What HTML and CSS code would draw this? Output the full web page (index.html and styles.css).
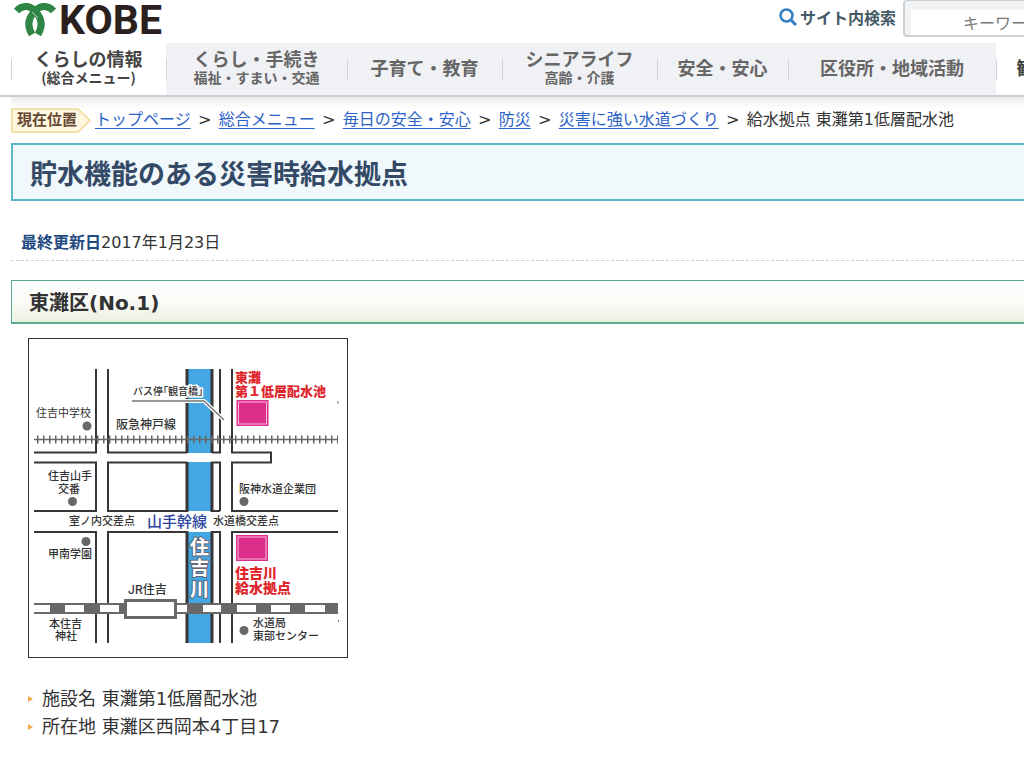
FILE: index.html
```html
<!DOCTYPE html>
<html lang="ja">
<head>
<meta charset="utf-8">
<meta name="viewport" content="width=device-width, initial-scale=1">
<title>貯水機能のある災害時給水拠点 - KOBE</title>
<link rel="stylesheet" href="styles.css">
</head>
<body>
<header class="header">
  <a class="logo" href="#" aria-label="KOBE">
    <svg class="logo-mark" viewBox="0 0 42 34" aria-hidden="true">
      <path d="M2.500 8C7 3 15 1 21 8C28 15 29 23 24 31.500" class="leaf"/>
      <path d="M39.500 8C35 3 27 1 21 8C14 15 13 23 18 31.500" class="leaf"/>
      <path d="M18 9L24 15" stroke="#fff" stroke-width=".7"/>
    </svg>
    <span class="logo-text">KOBE</span>
  </a>
  <form class="search">
    <label class="search-label" for="q">
      <svg class="search-icon" viewBox="0 0 18 18" aria-hidden="true"><circle cx="7.500" cy="7.500" r="6" fill="none" stroke="#337fc4" stroke-width="2.500"/><path d="M12 12l5 5" stroke="#337fc4" stroke-width="3"/></svg>
      サイト内検索
    </label>
    <span class="search-frame"><input id="q" class="search-input" type="text" placeholder="キーワード"></span>
  </form>
</header>
<nav class="nav">
  <a class="nav-item nav-m current" href="#">くらしの情報<small>(総合メニュー)</small></a>
  <a class="nav-item nav-l" href="#">くらし・手続き<small>福祉・すまい・交通</small></a>
  <a class="nav-item nav-m" href="#">子育て・教育</a>
  <a class="nav-item nav-m" href="#">シニアライフ<small>高齢・介護</small></a>
  <a class="nav-item nav-s" href="#">安全・安心</a>
  <a class="nav-item nav-xl" href="#">区役所・地域活動</a>
  <a class="nav-item nav-s current" href="#">観光・文化</a>
</nav>
<main class="main">
  <div class="crumbs">
    <span class="here"><svg class="here-shape" viewBox="0 0 80 25" aria-hidden="true"><path d="M1 1H67L79 12.500L67 24H1Z" fill="#fff7df" stroke="#edd791" stroke-width="1.500"/></svg><b class="here-text">現在位置</b></span>
    <ol class="crumb-list">
      <li><a href="#">トップページ</a></li>
      <li><a href="#">総合メニュー</a></li>
      <li><a href="#">毎日の安全・安心</a></li>
      <li><a href="#">防災</a></li>
      <li><a href="#">災害に強い水道づくり</a></li>
      <li>給水拠点 東灘第1低層配水池</li>
    </ol>
  </div>
  <h1 class="title">貯水機能のある災害時給水拠点</h1>
  <p class="updated"><b>最終更新日</b>2017年1月23日</p>
  <h2 class="section-title">東灘区(No.1)</h2>
  <svg class="map" viewBox="28 338 320 320" role="img" aria-label="東灘第1低層配水池 周辺地図">
    <rect x="28.500" y="338.500" width="319" height="319" fill="#fff" stroke="#333"/>
    <g fill="#42a7e3">
      <rect x="187" y="369" width="25" height="84"/>
      <rect x="187" y="462" width="25" height="49"/>
      <rect x="187" y="532" width="25" height="111"/>
    </g>
    <g class="road">
      <path d="M96 369V452.500H34M108 369V452.500H187M34 462.500H96V511H34M187 462.500H108V511H187M34 532H96V643M187 532H108V643"/>
      <path d="M220 369V452.500H212M220 511H212V462.500H220V511M212 532H220V643M232 369V452.500H271V462.500H232V511H338M338 532H232V643"/>
      <path class="bank" d="M187 369V453M212 369V453M187 462V512M212 462V512M187 531V643M212 531V643"/>
    </g>
    <path d="M34 439.500H338" stroke="#666" stroke-width="1.500"/>
    <path d="M37 439.500H338" stroke="#666" stroke-width="8" stroke-dasharray="1.500 4.500"/>
    <rect x="34" y="603" width="304" height="11" fill="#686868"/>
    <path d="M34 608.500H50M65 608.500H84M100 608.500H119M177 608.500H187M203 608.500H221M237 608.500H256M271 608.500H290M305 608.500H325" stroke="#fff" stroke-width="7"/>
    <rect x="125.500" y="600.500" width="50" height="17" fill="#fff" stroke="#686868" stroke-width="3"/>
    <g fill="#686868"><circle cx="87" cy="426" r="4.500"/><circle cx="72.500" cy="501.500" r="4.500"/><circle cx="86" cy="541.500" r="4.500"/><circle cx="244" cy="501.500" r="4.500"/><circle cx="244" cy="630.500" r="4.500"/></g>
    <path d="M132 401H204L225 421" fill="none" stroke="#fff" stroke-width="4"/>
    <path d="M132 401H204L224 420" fill="none" stroke="#777" stroke-width="1.500"/>
    <g fill="#dc2f8c" stroke="#dc2f8c">
      <rect x="237" y="400.500" width="31" height="25"/><rect x="236.500" y="535.500" width="31" height="25"/>
      <rect x="238.500" y="402" width="28" height="22" fill="none" stroke="#f7b9dc"/><rect x="238" y="537" width="28" height="22" fill="none" stroke="#f7b9dc"/>
    </g>
    <g class="place">
      <text class="halo" x="133" y="395">バス停<tspan class="half">「観音橋」</tspan></text>
      <text class="light" x="36" y="417">住吉中学校</text>
      <text class="rail" x="116" y="429">阪急神戸線</text>
      <text x="48" y="480">住吉山手</text><text x="58" y="493">交番</text>
      <text x="239" y="493">阪神水道企業団</text>
      <text x="69" y="525">室ノ内交差点</text><text x="213" y="525">水道橋交差点</text>
      <text x="48" y="558">甲南学園</text>
      <text class="rail" x="128" y="594">JR住吉</text>
      <text x="49" y="628">本住吉</text><text x="55" y="640">神社</text>
      <text x="253" y="627">水道局</text><text x="253" y="640">東部センター</text>
    </g>
    <text class="avenue" x="147" y="527">山手幹線</text>
    <g class="supply">
      <text x="235" y="382">東灘</text><text x="235" y="396">第１低層配水池</text>
      <text class="supply-l" x="235" y="578">住吉川</text><text class="supply-l" x="235" y="593">給水拠点</text>
    </g>
    <text class="river"><tspan x="190" y="554">住</tspan><tspan x="190" y="575">吉</tspan><tspan x="190" y="596">川</tspan></text>
    <path d="M338 401v3M338.500 620v2" stroke="#777" stroke-width="1"/>
  </svg>
  <ul class="facts">
    <li>施設名 東灘第1低層配水池</li>
    <li>所在地 東灘区西岡本4丁目17</li>
  </ul>
</main>
</body>
</html>
```
FILE: styles.css
```css
* { box-sizing: border-box; }
body {
  margin: 0;
  background: #fff;
  color: #333;
  font-family: "DejaVu Sans", "Noto Sans CJK JP", sans-serif;
  font-size: 16px;
  line-height: 24px;
  overflow-x: hidden;
}
.header {
  display: flex;
  justify-content: space-between;
  align-items: flex-start;
  height: 43px;
  padding-left: 14px;
}
.logo { display: flex; align-items: center; gap: 3px; color: #2a201e; text-decoration: none; }
.logo-mark { width: 42px; height: 34px; }
.leaf { fill: none; stroke: #2f8545; stroke-width: 7; }
.logo-text { font: 700 41px/40px Roboto, sans-serif; }
.search { display: flex; width: 245px; overflow: hidden; }
.search-label {
  display: flex;
  flex: none;
  align-items: center;
  gap: 3px;
  width: 124px;
  height: 34px;
  color: #465a66;
  font-family: "Noto Sans CJK JP", sans-serif;
  font-weight: 700;
}
.search-icon { width: 18px; height: 18px; }
.search-frame {
  flex: none;
  height: 37px;
  padding: 9px 6px 0;
  border: 2px solid #ccd1d6;
  border-top-width: 1px;
  border-radius: 4px;
  background: #f1f2f4;
}
.search-input { width: 220px; height: 25px; padding: 2px 0 0 52px; border: 0; background: #fff; font: inherit; }
.search-input::placeholder { color: #777; opacity: 1; }
.nav {
  display: flex;
  height: 54px;
  padding-left: 11px;
  border-bottom: 2px solid #c9cdd9;
  overflow: hidden;
}
.nav-item {
  display: flex;
  flex: none;
  flex-direction: column;
  align-items: center;
  justify-content: center;
  padding-bottom: 4px;
  background: linear-gradient(#d0d4de, #d0d4de) 0 16px / 1px 21px no-repeat #f0f1f4;
  color: #666;
  font-family: "Noto Sans CJK JP", sans-serif;
  font-size: 18px;
  font-weight: 700;
  line-height: 20px;
  text-decoration: none;
  white-space: nowrap;
}
.nav-item small { font-size: 14px; line-height: 18px; }
.current { background-color: #fff; color: #444; }
.nav-s { width: 131px; }
.nav-m { width: 155px; }
.nav-l { width: 181px; }
.nav-xl { width: 208px; }
.main { margin-left: 11px; background: linear-gradient(#eeeef0, #fff) 0 0 / 100% 12px no-repeat; }
.crumbs { display: flex; align-items: center; gap: 4px; height: 46px; }
.here { display: grid; flex: none; align-items: center; width: 80px; }
.here > * { grid-area: 1 / 1; }
.here-shape { width: 80px; height: 25px; }
.here-text { padding-left: 6px; color: #654733; font-size: 15px; line-height: 25px; }
.crumb-list { display: flex; margin: 0; padding: 0; list-style: none; white-space: nowrap; }
.crumb-list li + li::before { content: ">"; display: inline-block; width: 28px; text-align: center; }
.crumb-list a { color: #2b62c9; text-decoration: underline; text-underline-offset: 3px; }
.title {
  margin: 0 -4px 0 0;
  padding: 12px 17px 6px;
  border: 2px solid #5bb7cc;
  background: #f0f8fc;
  color: #334966;
  font-size: 27px;
  line-height: 36px;
}
.updated { margin: 30px 0 0; padding: 0 10px 5px; border-bottom: 1px dashed #ccc; }
.updated b { color: #234a80; }
.section-title {
  margin: 19px -4px 0 0;
  padding: 6px 17px 2px;
  border: 1px solid #5da992;
  border-bottom-width: 2px;
  background: linear-gradient(#fff, #f9fbf6 50%, #ebf1df);
  font-size: 20px;
  line-height: 33px;
}
.map { display: block; width: 320px; height: 320px; margin: 14px 0 0 17px; }
.map text { font-family: Inter, "Noto Sans CJK JP", sans-serif; }
.road { fill: none; stroke: #393536; stroke-width: 2; }
.bank { stroke-width: 3; }
.place { fill: #333; font-size: 11px; font-weight: 500; }
.place .light { font-weight: 400; }
.place .rail { font-size: 12px; }
.half { font-feature-settings: "halt"; }
.place .halo { stroke: #fff; stroke-width: 3; paint-order: stroke; font-size: 10px; }
.avenue { fill: #2c429f; font-size: 15px; font-weight: 500; }
.supply { fill: #e0262d; font-size: 13px; font-weight: 900; }
.supply-l { font-size: 14px; }
.river { fill: #fff; stroke: #667; stroke-width: 2; paint-order: stroke; font-size: 19px; font-weight: 700; }
.facts { margin: 27px 0 0 17px; padding: 0; list-style: none; font-size: 18px; line-height: 28px; }
.facts li { display: flex; align-items: center; gap: 9px; }
.facts li::before { content: ""; border: 3px solid transparent; border-left: 5px solid #f2aa45; border-right: 0; }
```
